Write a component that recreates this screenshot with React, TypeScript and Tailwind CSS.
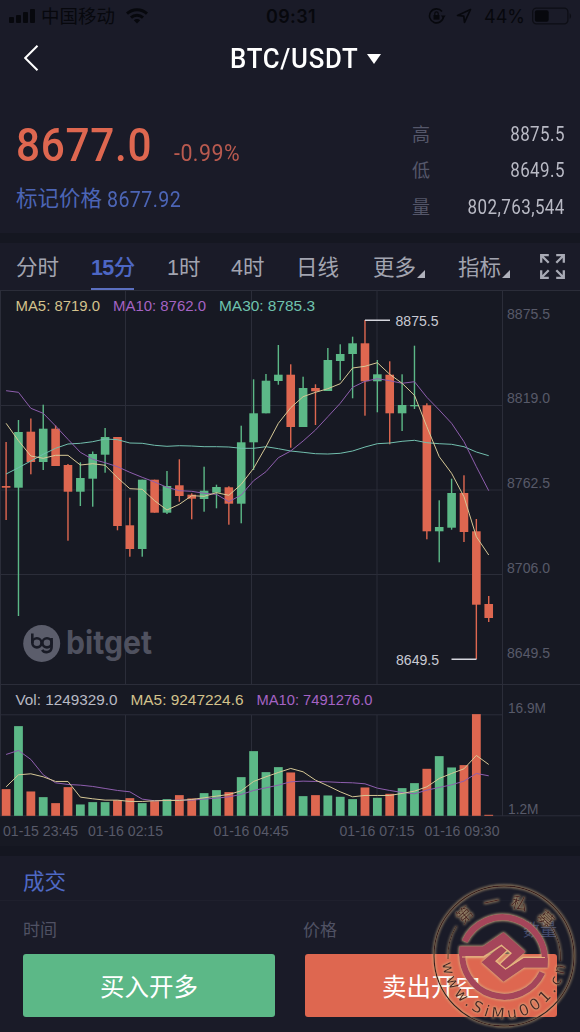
const UP = '#5cb887';
const DOWN = '#de6750';
const GRID = '#2b2d39';

const STEP = 12.375;
const FIRST_X = 6.1;
const cx = (i: number) => FIRST_X + i * STEP;

// [high, body top, body bottom, low, rising]
const candles: [number, number, number, number, number][] = [
  [442, 486, 487.7, 520, 0],
  [420, 432, 487.7, 616, 1],
  [418.5, 431.7, 462, 474.3, 0],
  [404.7, 428.7, 462, 470, 1],
  [425.5, 428.7, 466, 466, 0],
  [464, 465, 491.7, 540.7, 0],
  [462.3, 478, 491.7, 506, 1],
  [451.5, 454, 478.7, 506.7, 1],
  [428, 437, 454.7, 472.7, 1],
  [437, 437, 526, 530.3, 0],
  [497.7, 525.3, 549, 556.7, 0],
  [479.7, 479.7, 549, 556.7, 1],
  [479.7, 479.7, 512.7, 512.7, 0],
  [471, 486, 512.7, 514, 1],
  [459.3, 485.3, 496, 501.7, 0],
  [493.3, 494.7, 498.7, 519.3, 0],
  [466.7, 490.7, 499, 511.7, 1],
  [484.7, 487, 492.7, 508.3, 1],
  [486.3, 487.3, 503.7, 524.7, 0],
  [425.7, 442.3, 503.7, 523.3, 1],
  [379.3, 413.3, 442.3, 470, 1],
  [374, 380.7, 413.3, 413.3, 1],
  [345, 374.7, 381, 384.7, 1],
  [364.3, 374.7, 427, 447.7, 0],
  [376.7, 388, 427, 427, 1],
  [384.3, 388, 391.3, 425, 0],
  [348, 360, 391, 391, 1],
  [344.3, 354, 361, 380.3, 1],
  [336.7, 343.3, 354, 398.3, 1],
  [320, 343.3, 381.3, 415.7, 0],
  [360, 374.3, 381.3, 412.3, 1],
  [361.3, 374.7, 413.3, 444.3, 0],
  [374.3, 405, 413.3, 431, 1],
  [345.7, 405, 406.3, 409, 1],
  [403.3, 405.3, 531.3, 539.3, 0],
  [500.3, 527, 531.3, 562.3, 1],
  [478.7, 493, 527.7, 529.7, 1],
  [475.3, 493, 532, 542, 0],
  [519, 531.3, 604.7, 659, 0],
  [596, 604, 618, 622, 0],
];

const ma5 = [423.3, 440.7, 456, 458.3, 455.3, 455.3, 465, 463.7, 465.3, 477.7, 488.7, 489.3, 500.7, 510, 504.3, 495.7, 496.3, 492.7, 495.3, 484.3, 468.3, 446.7, 423.3, 407.7, 396.7, 392.3, 388.7, 383.7, 368, 366.3, 362.7, 374.3, 383.3, 395.3, 426.7, 456.7, 473.3, 496.7, 536.7, 555];
const ma10 = [390.7, 392.3, 408.3, 413.3, 426, 439.3, 452.3, 459.3, 462.7, 466.7, 472.3, 477.3, 482, 487.3, 490.7, 491.3, 493.3, 494.3, 501.7, 495, 480.7, 471.7, 457.7, 451, 441, 430, 416.7, 403.3, 387.3, 381.3, 378.7, 380.7, 383.3, 381.7, 397.3, 410, 423.3, 441.7, 466.7, 490.7];
const ma30 = [474, 467.7, 461, 454.3, 448.3, 444, 443.3, 441.7, 439, 439.7, 443, 443.3, 445.3, 446.3, 445.7, 446, 446.7, 446.7, 447, 448.3, 448.3, 446.7, 448.7, 451, 452.3, 453.7, 454, 453.3, 451, 447, 443.7, 443, 441.3, 440.3, 442.7, 443.7, 444.3, 446.7, 452, 455.7];

// volume panel values, in thirds of a pixel above the baseline
const volumes = [80, 269, 73, 56, 38, 86, 34, 41, 41, 47, 53, 38, 44, 50, 62, 52, 68, 77, 71, 116, 194, 131, 146, 130, 59, 62, 61, 57, 50, 85, 54, 66, 83, 98, 141, 179, 145, 152, 305, 3];
const volMa5 = [87, 123, 126, 117, 103, 103, 56, 51, 47, 47, 43, 43, 45, 46, 46, 49, 54, 59, 64, 75, 103, 117, 130, 142, 132, 107, 90, 72, 57, 61, 61, 61, 67, 74, 87, 112, 127, 141, 181, 154];
const volMa10 = [184, 196, 169, 123, 99, 94, 92, 88, 82, 76, 72, 50, 45, 46, 47, 47, 50, 53, 57, 64, 76, 84, 92, 102, 104, 103, 102, 100, 99, 96, 83, 76, 70, 66, 77, 85, 93, 104, 127, 120];

const linePoints = (ys: number[]) => ys.map((y, i) => `${cx(i)},${y}`).join(' ');
const volY = (v: number) => 815.8 - v / 3;

const stats = [
  { label: '高', value: '8875.5' },
  { label: '低', value: '8649.5' },
  { label: '量', value: '802,763,544' },
];

type LabelProps = { x: number; y: number; w: number; fill: string; children: string };

const Label = ({ x, y, w, fill, children }: LabelProps) => (
  <text x={x} y={y} textLength={w} lengthAdjust="spacingAndGlyphs" fill={fill} fontSize="14">
    {children}
  </text>
);

const StatusBar = () => (
  <div className="h-8 flex items-center justify-between px-[9px] text-[#07080d] text-[18px]">
    <div className="w-[200px] flex items-center">
      <svg width="26" height="16" viewBox="0 0 26 16" fill="currentColor">
        <rect x="0" y="9" width="5" height="6" rx="1" />
        <rect x="7" y="7" width="5" height="8" rx="1" />
        <rect x="14" y="4" width="5" height="11" rx="1" />
        <rect x="21" y="1" width="5" height="14" rx="1" />
      </svg>
      <span className="ml-1.5 leading-8 text-[18.5px] relative top-px">中国移动</span>
      <svg className="ml-[11px]" width="22" height="16" viewBox="0 0 22 16" fill="none" stroke="currentColor" strokeWidth="3">
        <path d="M1 5.6C6.500 0.300 15.500 0.300 21 5.600" />
        <path d="M5 9.600C8.300 6.500 13.700 6.500 17 9.600" />
        <path d="M11 15.500l-3.200-3.300c1.800-1.700 4.600-1.700 6.400 0z" fill="currentColor" stroke="none" />
      </svg>
    </div>
    <span className="pl-0.5 font-['Inter','Liberation_Sans',sans-serif] font-semibold text-[18px] tracking-[0.4px]">09:31</span>
    <div className="w-[200px] flex items-center justify-end font-['Inter','Liberation_Sans',sans-serif]">
      <svg width="18" height="18" viewBox="0 0 18 18" fill="none" stroke="currentColor" strokeWidth="1.6">
        <path d="M15.500 9.500A7 7 0 1 1 14 4.500" />
        <path d="M12.800 8.500h4.800l-2.200 3z" fill="currentColor" stroke="none" />
        <rect x="5.500" y="8" width="6" height="4.600" fill="currentColor" stroke="none" />
        <path d="M6.800 8V6.500a1.700 1.700 0 0 1 3.400 0V8" strokeWidth="1.2" />
      </svg>
      <svg className="ml-2.5" width="16" height="16" viewBox="0 0 16 16" fill="none" stroke="currentColor" strokeWidth="1.7" strokeLinejoin="round">
        <path d="M14.500 1.500L1.500 7.500l6.300.7.700 6.300z" />
      </svg>
      <span className="ml-3 text-[18px]">44%</span>
      <svg className="ml-[7px] -mr-px" width="40" height="18" viewBox="0 0 42 18" fill="none">
        <rect x="0.700" y="0.700" width="37" height="16.600" rx="4" stroke="#0d0e15" strokeWidth="1.400" />
        <rect x="3" y="3" width="14.500" height="12" rx="2" fill="currentColor" />
        <path d="M39.500 6c2 1 2 5 0 6z" fill="#0d0e15" />
      </svg>
    </div>
  </div>
);

const NavBar = () => (
  <div className="h-[54px] relative flex items-center text-white pl-[230px]">
    <svg className="absolute left-6 top-[13px]" width="15" height="26" viewBox="0 0 15 26" fill="none" stroke="currentColor" strokeWidth="2">
      <path d="M13.500 0.800L1.200 13l12.300 12.200" />
    </svg>
    <span className="w-[137px] origin-left scale-x-[0.92] font-['Roboto',sans-serif] font-medium text-[28px] leading-none tracking-[0.8px]">
      BTC/USDT
    </span>
    <svg width="14" height="10" viewBox="0 0 14 10" fill="currentColor">
      <path d="M0 0h14L7 10z" />
    </svg>
  </div>
);

const PriceHeader = () => (
  <section className="h-[147px] pt-[30px] px-4 flex justify-between">
    <div>
      <div className="flex items-baseline font-['Roboto',sans-serif]">
        <span className="w-[158px] origin-left scale-x-[0.9] text-[47px] leading-[58px] font-medium text-[#de6750] tracking-[0.8px]">8677.0</span>
        <span className="origin-left scale-x-[0.93] text-[23px] text-[#b95a4f] tracking-[0.5px]">-0.99%</span>
      </div>
      <p className="mt-[10px] flex text-[21.500px] leading-[30px] text-[#4c65b6] whitespace-nowrap">
        标记价格
        <span className="ml-[5px] origin-left scale-x-[0.87] font-['Roboto',sans-serif] text-[22.500px] tracking-[0.5px]">8677.92</span>
      </p>
    </div>
    <div className="w-[152px] flex flex-col">
      {stats.map((s) => (
        <div key={s.label} className="h-[36.500px] flex items-center justify-between">
          <span className="relative top-px text-[18px] text-[#55576a]">{s.label}</span>
          <span className="-mr-px origin-right scale-x-[0.87] font-['Roboto',sans-serif] text-[19.500px] text-[#b9bac5] tracking-[0.5px]">{s.value}</span>
        </div>
      ))}
    </div>
  </section>
);

const Corner = () => (
  <svg className="self-end mb-3 ml-px" width="8" height="8" viewBox="0 0 8 8" fill="#b0b2bc">
    <path d="M8 0v8H0z" />
  </svg>
);

const Tabs = () => (
  <nav className="h-[47px] flex text-[21.500px] text-[#a2a4b0] leading-[50px] whitespace-nowrap">
    <span className="ml-4 w-[75px]">分时</span>
    <span className="w-[76px]">
      <span className="block w-[43px] h-[46.500px] text-[#4d67c4] font-bold text-[21.500px] tracking-[-0.6px] border-b-[2.500px] border-[#5b6fc0]">
        15<span className="font-medium">分</span>
      </span>
    </span>
    <span className="w-16">1时</span>
    <span className="w-[65px]">4时</span>
    <span className="w-[77px]">日线</span>
    <span className="w-[85px] flex">更多<Corner /></span>
    <span className="w-[82px] flex">指标<Corner /></span>
    <svg className="mt-[11px]" width="25" height="25" viewBox="0 0 25 25" fill="none" stroke="#a8aab5" strokeWidth="2.300">
      <path d="M8.800 1.200H1.200v7.600M1.200 1.200l7.500 7.500" />
      <path d="M16.200 1.200h7.600v7.600M23.800 1.200l-7.500 7.500" />
      <path d="M8.800 23.800H1.200v-7.600M1.200 23.800l7.500-7.500" />
      <path d="M16.200 23.800h7.600v-7.600M23.800 23.800l-7.500-7.500" />
    </svg>
  </nav>
);

const Watermark = () => (
  <g>
    <circle cx="41.700" cy="643.500" r="18.500" fill="#5b5d6b" />
    <g fill="none" stroke="#191b26" strokeWidth="2.600">
      <path d="M32.300 633.500v9.500" />
      <circle cx="36.900" cy="642.800" r="4.600" />
      <circle cx="47" cy="642.800" r="4.600" />
      <path d="M51.600 638v9c0 6-7.500 6.300-9.400 2.800" />
    </g>
    <text x="66" y="654" textLength="86" lengthAdjust="spacingAndGlyphs" fontSize="32" fontWeight="700" fill="#4f515f" fontFamily="Inter, sans-serif">
      bitget
    </text>
  </g>
);

const PriceChart = () => (
  <svg className="block" width="580" height="394" viewBox="0 290 580 394">
    <g stroke={GRID} strokeWidth="1">
      <path d="M0 290.500H580M0 405.500H502M0 490H502M0 574.500H502" />
      <path d="M0.500 290V684M125.500 290V684M251.500 290V684M377 290V684M502.500 290V684" />
    </g>
    <Watermark />
    {candles.map(([high, top, bottom, low, up], i) => (
      <g key={i} fill={up ? UP : DOWN}>
        <rect x={cx(i) - 0.7} y={high} width="1.4" height={low - high} />
        <rect x={cx(i) - 4.3} y={top} width="8.6" height={bottom - top} />
      </g>
    ))}
    <g fill="none" strokeWidth="1">
      <polyline points={linePoints(ma30)} stroke="#72bfae" />
      <polyline points={linePoints(ma10)} stroke="#8e5eae" />
      <polyline points={linePoints(ma5)} stroke="#d6c896" />
      <path d="M365 320.300H390M451.500 659.200H476.500" stroke="#d5d6dd" strokeWidth="1.400" />
    </g>
    <Label x={15.5} y={310.500} w={84.500} fill="#d3c28c">MA5: 8719.0</Label>
    <Label x={113} y={310.500} w={93} fill="#a563c4">MA10: 8762.0</Label>
    <Label x={219} y={310.500} w={96} fill="#6fc3ae">MA30: 8785.3</Label>
    <Label x={395.5} y={326} w={43} fill="#c9cad3">8875.5</Label>
    <Label x={396} y={664.500} w={43} fill="#c9cad3">8649.5</Label>
    <g>
      <Label x={507} y={318.500} w={43} fill="#585a69">8875.5</Label>
      <Label x={507} y={403} w={43} fill="#585a69">8819.0</Label>
      <Label x={507} y={488} w={43} fill="#585a69">8762.5</Label>
      <Label x={507} y={572.500} w={43} fill="#585a69">8706.0</Label>
      <Label x={507} y={657.500} w={43} fill="#585a69">8649.5</Label>
    </g>
  </svg>
);

const VolumeChart = () => (
  <svg className="block" width="580" height="162" viewBox="0 684 580 162">
    <g stroke={GRID} strokeWidth="1">
      <path d="M0 684.500H580M0 714.800H502M0 815.800H580" />
      <path d="M0.500 684V816M125.500 715V816M251.500 715V816M377 715V816M502.500 684V816" />
    </g>
    {volumes.map((v, i) => (
      <rect key={i} x={cx(i) - 4.4} y={volY(v)} width="8.8" height={v / 3} fill={candles[i][4] ? UP : DOWN} />
    ))}
    <g fill="none" strokeWidth="1">
      <polyline points={linePoints(volMa10.map(volY))} stroke="#8e5eae" />
      <polyline points={linePoints(volMa5.map(volY))} stroke="#d6c896" />
    </g>
    <Label x={15.5} y={705} w={102} fill="#b9bac4">Vol: 1249329.0</Label>
    <Label x={130.5} y={705} w={113} fill="#d3c28c">MA5: 9247224.6</Label>
    <Label x={256.5} y={705} w={116} fill="#a563c4">MA10: 7491276.0</Label>
    <Label x={508} y={713} w={38} fill="#585a69">16.9M</Label>
    <Label x={508} y={813.500} w={30.500} fill="#585a69">1.2M</Label>
    <Label x={3} y={835.500} w={75} fill="#585a69">01-15 23:45</Label>
    <Label x={88} y={835.500} w={75} fill="#585a69">01-16 02:15</Label>
    <Label x={213.500} y={835.500} w={75} fill="#585a69">01-16 04:45</Label>
    <Label x={339.500} y={835.500} w={75} fill="#585a69">01-16 07:15</Label>
    <Label x={424.500} y={835.500} w={75} fill="#585a69">01-16 09:30</Label>
  </svg>
);

const Trades = () => (
  <section className="h-[176px] bg-[#1a1b28]">
    <h2 className="h-[45px] pl-[23px] text-[21.500px] leading-[52px] text-[#4f69c4] border-b border-[#1f202d]">成交</h2>
    <div className="h-[53px] pt-3 px-[23px] flex text-[17px] leading-[36px] text-[#505264]">
      <span className="w-[280px]">时间</span>
      <span className="flex-1">价格</span>
      <span className="text-[#414869]">数量</span>
    </div>
    <div className="px-[23px] flex gap-[30px] text-white text-[24.500px]">
      <button className="flex-1 h-[63px] pt-1.5 rounded-[3px] bg-[#5cb887]">买入开多</button>
      <button className="flex-1 h-[63px] pt-1.5 rounded-[3px] bg-[#de6750]">卖出开空</button>
    </div>
  </section>
);

// one half of the seal's emblem; the other half is the same shape turned by 180 degrees
const EmblemHalf = () => (
  <g>
    <path d="M462.800 948a42 42 0 0 0 79.500 24.500" fill="none" stroke="#a5445a" strokeWidth="6.200" />
    <path d="M459.300 946.300H483L503.500 932.300L525.500 951.700L505.500 969L498.500 964.800L511.500 953L501.500 944.500L483.500 956H459.300z" fill="#a5445a" />
  </g>
);

// seal drawn over the bottom right corner of the screen
const Seal = () => (
  <svg className="absolute right-0 bottom-0 pointer-events-none" width="150" height="150" viewBox="430 882 150 150">
    <defs>
      <path id="seal-bottom" d="M442 957a62 62 0 0 0 124 0" />
      <filter id="seal-glow" x="-20%" y="-20%" width="140%" height="140%">
        <feGaussianBlur in="SourceAlpha" stdDeviation="1.7" result="halo" />
        <feFlood floodColor="#d9b98a" floodOpacity="0.7" />
        <feComposite in2="halo" operator="in" result="tint" />
        <feMerge>
          <feMergeNode in="tint" />
          <feMergeNode in="tint" />
          <feMergeNode in="SourceGraphic" />
        </feMerge>
      </filter>
    </defs>
    <g filter="url(#seal-glow)">
      <g fill="none" stroke="#391e1f">
        <circle cx="504" cy="956" r="70" strokeWidth="1.3" />
        <path d="M448 959a56 56 0 0 1 8.500-33M551.500 927a56 56 0 0 1 9 34" strokeWidth="1" />
      </g>
    </g>
    <g filter="url(#seal-glow)">
      <EmblemHalf />
      <g transform="rotate(180 503.500 957)">
        <EmblemHalf />
      </g>
      {/* light seams between the two halves */}
      <path d="M462 957H484L501.500 945.500L511 953.300L499 964.500" fill="none" stroke="#e7b57e" strokeWidth="1.200" />
      <path d="M545 957.500H523L505.500 969L496 961.200L508 950" fill="none" stroke="#e7b57e" strokeWidth="1.200" />
    </g>
    <g fill="#4a2526" filter="url(#seal-glow)">
      <g fontSize="16.500">
        <text transform="translate(464.500 915) rotate(-42)" textAnchor="middle" dy="6">第</text>
        <text transform="translate(491.500 902) rotate(-12)" textAnchor="middle" dy="6">一</text>
        <text transform="translate(519.500 903.500) rotate(14)" textAnchor="middle" dy="6">私</text>
        <text transform="translate(546 919) rotate(43)" textAnchor="middle" dy="6">募</text>
      </g>
      <text fontSize="15.500" fontFamily="'DejaVu Sans', sans-serif">
        <textPath href="#seal-bottom" startOffset="6" textLength="180">www.SiMu001.cn</textPath>
      </text>
    </g>
  </svg>
);

const App = () => {
  return (
    <div className="relative w-[580px] h-[1032px] overflow-hidden bg-[#1a1b28] font-['Liberation_Sans','Noto_Sans_CJK_SC',sans-serif]">
      <StatusBar />
      <NavBar />
      <PriceHeader />
      <div className="h-2.5 bg-[#151721]" />
      <Tabs />
      <div className="bg-[#171923]">
        <PriceChart />
        <VolumeChart />
      </div>
      <div className="h-2.5 bg-[#141620]" />
      <Trades />
      <Seal />
    </div>
  );
};

export default App;
